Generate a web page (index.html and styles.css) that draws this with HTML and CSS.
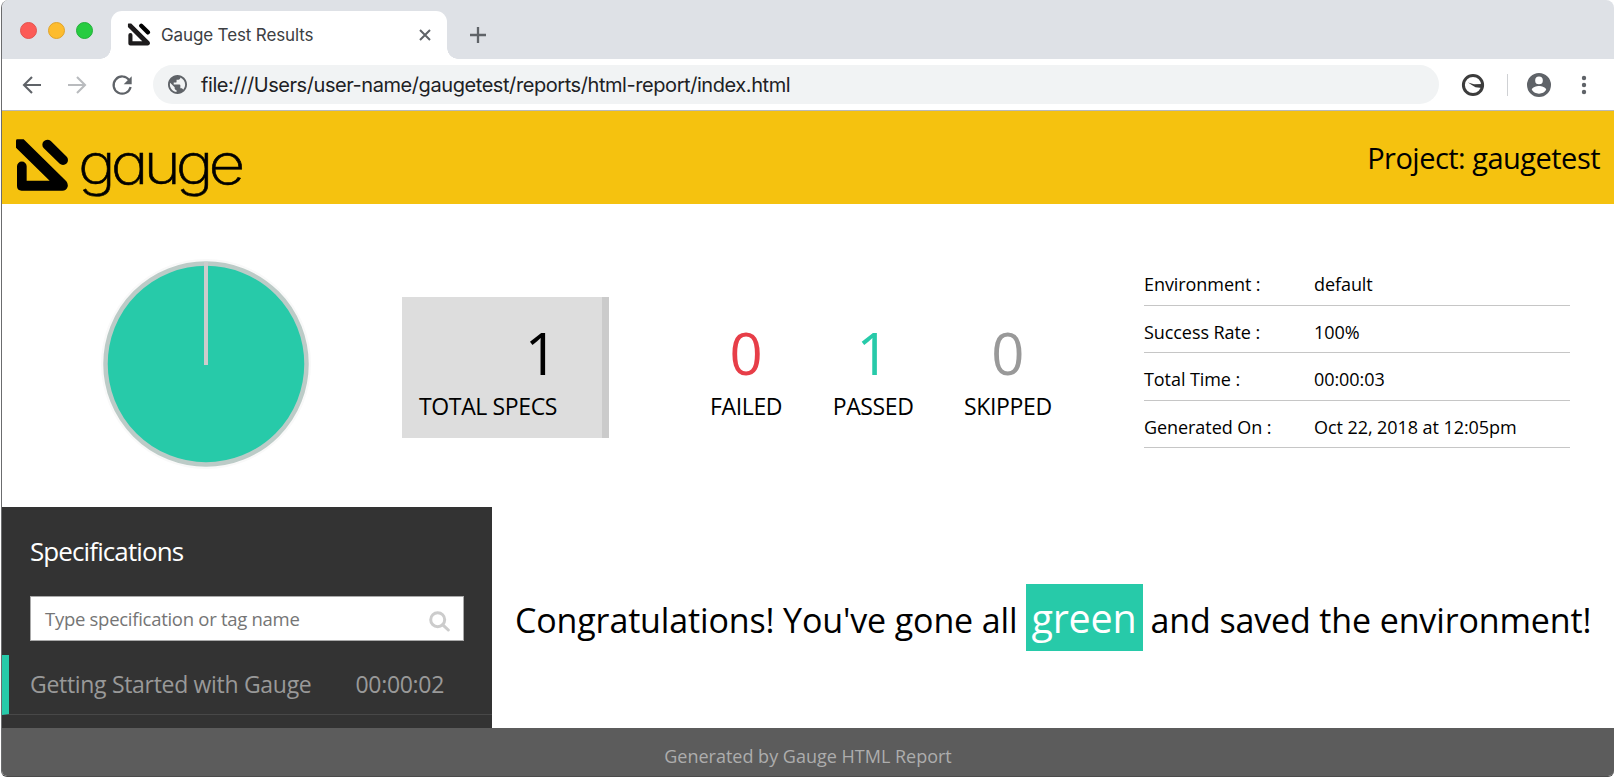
FILE: index.html
```html
<!DOCTYPE html>
<html lang="en">
<head>
<meta charset="utf-8">
<title>Gauge Test Results</title>
<link rel="stylesheet" href="styles.css">
</head>
<body>
<div class="window">
  <div class="tabstrip">
    <div class="lights"><i class="light red"></i><i class="light amber"></i><i class="light lime"></i></div>
    <div class="tab">
      <svg class="favicon" viewBox="45 54 164 162"><path d="M49 62Q49 58 53 58H72L200 184Q206 192 204 200Q200 212 188 212H66Q52 212 52 198V139A14.5 14.5 0 0 1 81 139V182H150L49 83Z"/><path class="bar" d="M143 74L190 120"/></svg>
      <span class="tab-title">Gauge Test Results</span>
      <svg class="close" viewBox="0 0 14 14"><path d="M2 2L12 12M12 2L2 12"/></svg>
    </div>
    <svg class="plus" viewBox="0 0 18 18"><path d="M9 1V17M1 9H17"/></svg>
  </div>
  <div class="toolbar">
    <svg class="nav" viewBox="0 0 24 24"><path d="M21 12H4M12 4L4 12L12 20"/></svg>
    <svg class="nav dim" viewBox="0 0 24 24"><path d="M3 12H20M12 4L20 12L12 20"/></svg>
    <svg class="nav reload" viewBox="0 0 24 24"><path d="M19.3 7.2A8.6 8.6 0 1 0 20.6 14"/><path class="solid" d="M21.7 3.2V11.2H13.7Z"/></svg>
    <div class="omnibox">
      <svg class="globe" viewBox="2 2 20 20"><path d="M12 2C6.500 2 2 6.500 2 12s4.500 10 10 10 10-4.500 10-10S17.500 2 12 2zm-1 17.900C7.100 19.400 4 16.100 4 12c0-.6.1-1.200.2-1.800L9 15v1c0 1.100.9 2 2 2v1.900zm6.900-2.500c-.3-.8-1-1.400-1.900-1.400h-1v-3c0-.6-.4-1-1-1H8v-2h2c.6 0 1-.4 1-1V7h2c1.100 0 2-.9 2-2v-.4c2.900 1.200 5 4.100 5 7.400 0 2.100-.8 4-2.100 5.400z"/></svg>
      <span class="url">file:///Users/user-name/gaugetest/reports/html-report/index.html</span>
    </div>
    <svg class="ext" viewBox="0 0 24 24"><circle cx="12" cy="12" r="9.600"/><path d="M7 9.500L13 11.200L21 11V15L14.500 14.200Q12 13 7 9.500Z"/></svg>
    <i class="divider"></i>
    <svg class="avatar" viewBox="2 2 20 20"><path d="M12 2a10 10 0 1 0 0 20 10 10 0 0 0 0-20zm0 3a3.200 3.200 0 1 1 0 6.400A3.200 3.200 0 0 1 12 5zm0 14.200a7.200 7.200 0 0 1-6-3.200c0-2 4-3.100 6-3.100s6 1.100 6 3.100a7.200 7.200 0 0 1-6 3.200z"/></svg>
    <svg class="menu" viewBox="0 0 6 20"><circle cx="3" cy="3" r="2.200"/><circle cx="3" cy="10" r="2.200"/><circle cx="3" cy="17" r="2.200"/></svg>
  </div>
  <header class="header">
    <div class="brand">
      <svg class="mark" viewBox="49 58 156 154"><path d="M49 62Q49 58 53 58H72L200 184Q206 192 204 200Q200 212 188 212H66Q52 212 52 198V139A14.5 14.5 0 0 1 81 139V182H150L49 83Z"/><path class="bar" d="M143 74L190 120"/></svg>
      <span class="wordmark">gauge</span>
    </div>
    <span class="project">Project: gaugetest</span>
  </header>
  <section class="summary">
    <svg class="pie" viewBox="0 0 216 216"><circle class="halo" cx="108" cy="108" r="105"/><circle class="disc" cx="108" cy="108" r="100.500"/><path d="M108 6V109"/></svg>
    <div class="total"><b class="num">1</b><span class="label">TOTAL SPECS</span></div>
    <div class="counts">
      <div class="count failed"><b class="num">0</b><span class="label">FAILED</span></div>
      <div class="count passed"><b class="num">1</b><span class="label">PASSED</span></div>
      <div class="count skipped"><b class="num">0</b><span class="label">SKIPPED</span></div>
    </div>
    <dl class="facts">
      <div class="fact"><dt>Environment :</dt><dd>default</dd></div>
      <div class="fact"><dt>Success Rate :</dt><dd>100%</dd></div>
      <div class="fact"><dt>Total Time :</dt><dd>00:00:03</dd></div>
      <div class="fact"><dt>Generated On :</dt><dd>Oct 22, 2018 at 12:05pm</dd></div>
    </dl>
  </section>
  <main class="main">
    <aside class="sidebar">
      <h2 class="heading">Specifications</h2>
      <div class="search"><span class="hint">Type specification or tag name</span><svg class="lens" viewBox="0 0 21 21"><circle cx="8.700" cy="8.700" r="7"/><path d="M13.800 13.800L19.300 19"/></svg></div>
      <div class="spec"><span>Getting Started with Gauge</span><span>00:00:02</span></div>
    </aside>
    <p class="congrats"><span>Congratulations! You've gone all</span><span class="green">green</span><span>and saved the environment!</span></p>
  </main>
  <footer class="footer">Generated by Gauge HTML Report</footer>
</div>
</body>
</html>
```
FILE: styles.css
```css
* { box-sizing: border-box; }
body { margin: 0; background: #fff; font-family: "Open Sans", "Noto Sans", sans-serif; color: #000; }
svg { display: block; flex: none; }
span { white-space: nowrap; }

.window { width: 1613px; height: 777px; margin-left: 1px; border-left: 1px solid #6b6c6e; border-bottom: 1px solid #4a4a4a; border-radius: 8px 8px 6px 6px; overflow: hidden; display: flex; flex-direction: column; }
.window > * { flex: none; }

.tabstrip { height: 59px; background: #dee1e6; display: flex; align-items: flex-start; }
.lights { display: flex; gap: 11px; padding: 22px 0 0 18px; width: 109px; }
.light { width: 17px; height: 17px; border-radius: 50%; }
.red { background: #fc5b57; border: 1px solid #e2544f; }
.amber { background: #fdbc2e; border: 1px solid #e0a32a; }
.lime { background: #27cc41; border: 1px solid #22b03a; }
.tab { position: relative; width: 336px; height: 48px; margin-top: 11px; background: #fff; border-radius: 11px 11px 0 0; display: flex; align-items: center; padding: 0 15px 1px 16px; }
.tab::before, .tab::after { content: ""; position: absolute; bottom: 0; width: 11px; height: 11px; }
.tab::before { left: -11px; background: radial-gradient(circle at 0 0, #dee1e6 10.5px, #fff 11px); }
.tab::after { right: -11px; background: radial-gradient(circle at 100% 0, #dee1e6 10.5px, #fff 11px); }
.favicon { width: 24px; height: 23px; fill: #1d1b1c; }
.bar { stroke: #000; stroke-width: 30; stroke-linecap: round; fill: none; }
.tab-title { font: 17px/20px Inter, sans-serif; letter-spacing: -0.13px; color: #3c4043; margin-left: 10px; flex: 1; }
.close { width: 14px; height: 14px; fill: none; stroke: #5f6368; stroke-width: 2; }
.plus { width: 18px; height: 18px; margin: 26px 0 0 22px; fill: none; stroke: #5f6368; stroke-width: 2.3; }

.toolbar { height: 52px; border-bottom: 1px solid #b9b9b9; display: flex; align-items: center; padding: 0 0 0 18px; background: #fff; }
.nav { width: 24px; height: 24px; margin-right: 21px; fill: none; stroke: #5f6368; stroke-width: 2.1; }
.dim { stroke: #b9bbbe; }
.reload { margin-right: 19px; stroke-width: 2.2; }
.reload .solid { fill: #5f6368; stroke: none; }
.omnibox { width: 1286px; height: 39px; border-radius: 20px; background: #f1f3f4; display: flex; align-items: center; padding-left: 15px; }
.globe { width: 19px; height: 19px; fill: #5f6368; }
.url { font: 20px/24px Inter, sans-serif; letter-spacing: -0.43px; color: #202124; margin-left: 14px; }
.ext { width: 24px; height: 24px; margin-left: 22px; fill: #3c3c3c; }
.ext circle { fill: none; stroke: #3c3c3c; stroke-width: 3; }
.divider { width: 1px; height: 22px; background: #cfd1d4; margin-left: 22px; }
.avatar { width: 24px; height: 24px; margin-left: 19px; fill: #5f6368; }
.menu { width: 6px; height: 20px; margin-left: 30px; fill: #5f6368; }

.header { height: 93px; background: #f5c20f; display: flex; justify-content: space-between; padding: 0 14px; }
.brand { display: flex; }
.mark { width: 52px; height: 52px; margin-top: 28px; }
.wordmark { font: 200 57px/60px Inter, sans-serif; font-feature-settings: "cv11"; letter-spacing: -4.500px; -webkit-text-stroke: 0.600px #000; transform: scaleX(1.12); transform-origin: 0 0; margin: 23px 0 0 10px; }
.project { font-size: 29px; line-height: 40px; letter-spacing: -0.520px; margin-top: 27px; }

.summary { height: 303px; display: flex; }
.pie { width: 216px; height: 216px; margin: 52px 0 0 96px; }
.pie .halo { fill: #f9f9f9; }
.pie .disc { fill: #27caa9; stroke: #bccbc7; stroke-width: 4.500; }
.pie path { stroke: #ccc; stroke-width: 4; }
.total { width: 207px; height: 141px; margin: 93px 0 0 88px; background: #ddd; border-right: 7px solid #cbcbcb; display: flex; flex-direction: column; padding: 17px 44px 0 17px; }
.num { font-weight: 400; font-size: 58px; line-height: 80px; margin: -1px 0 1px; }
.total .num { text-align: right; }
.label { font-size: 23px; line-height: 24px; letter-spacing: -0.360px; }
.counts { display: flex; gap: 50.500px; margin: 110px 0 0 101px; }
.count { display: flex; flex-direction: column; align-items: center; }
.failed .num { color: #e73e48; }
.passed .num { color: #27caa9; }
.skipped .num { color: #999; }
.facts { width: 426px; margin: 54px 44px 0 auto; font-size: 18px; letter-spacing: -0.070px; }
.fact { display: flex; height: 47.600px; border-bottom: 1px solid #c6c6c6; line-height: 24px; padding-top: 14px; }
.fact dt { width: 170px; }
.fact dd { margin: 0; }

.main { height: 221px; display: flex; }
.sidebar { width: 490px; flex: none; background: #333; }
.heading { margin: 27px 0 0 28px; font-size: 26px; font-weight: 400; line-height: 34px; letter-spacing: -0.900px; color: #fff; }
.search { width: 434px; height: 45px; margin: 28px 0 0 28px; background: #fff; border: 1px solid #aaa; display: flex; align-items: center; justify-content: space-between; padding: 0 13px 0 14px; }
.hint { font-size: 18.500px; letter-spacing: -0.280px; color: #757575; }
.lens { width: 21px; height: 21px; margin-top: 5px; fill: none; stroke: #ccc; stroke-width: 3; stroke-linecap: round; }
.spec { height: 60px; margin-top: 14px; border-left: 7px solid #27caa9; border-bottom: 1px solid #484848; display: flex; justify-content: space-between; padding: 12px 48px 0 21px; font-size: 23px; line-height: 34px; letter-spacing: -0.310px; color: #999; }
.congrats { margin: 77px 0 0 23px; display: flex; align-items: flex-start; font-size: 34px; line-height: 73px; letter-spacing: -0.140px; }
.green { background: #27caa9; color: #fff; font-size: 39.500px; font-weight: 500; line-height: 69px; height: 67px; margin: 0 8px 0 9px; padding: 0 6px 0 5px; letter-spacing: -0.200px; }
.footer { height: 48px; background: #5c5c5c; color: #adadad; font-size: 18px; line-height: 56px; text-align: center; }
```
